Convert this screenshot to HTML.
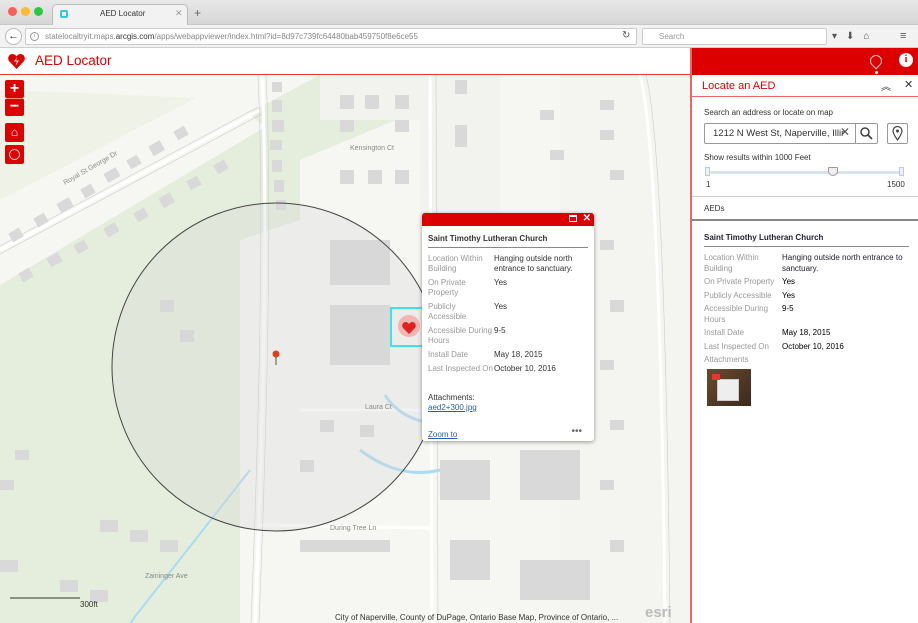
<!DOCTYPE html>
<html><head><meta charset="utf-8"><style>
*{box-sizing:border-box;margin:0;padding:0}
body{width:918px;height:623px;overflow:hidden;font-family:"Liberation Sans",sans-serif;position:relative;background:#fff}
.abs{position:absolute}
.tabbar{left:0;top:0;width:918px;height:25px;background:linear-gradient(#e8e8e8,#d6d6d6);border-bottom:1px solid #c8c8c8}
.addr{left:0;top:25px;width:918px;height:23px;background:#f2f2f2;border-bottom:1px solid #cfcfcf}
.hdr{left:0;top:48px;width:690px;height:27px;background:#fff;border-bottom:1px solid #e33}
.map{left:0;top:75px;width:690px;height:548px;overflow:hidden;background:#f6f6f3}
.btn{position:absolute;left:5px;width:19px;height:19px;background:#d00;border-radius:2px;color:#fff;text-align:center;font-weight:bold}
.panel{left:690px;top:48px;width:228px;height:575px;background:#fff;border-left:2px solid #e66}
.pop{left:422px;top:213px;width:172px;height:228px;background:#fff;box-shadow:0 1px 4px rgba(0,0,0,.4);border-radius:3px;overflow:hidden;font-size:8px;color:#333}
.row{display:flex;margin-bottom:4px;line-height:10px}
.row .k{color:#999;width:66px}
.prow{display:flex;line-height:10.5px;margin-bottom:3px;font-size:8px}
.prow .k{color:#999;width:78px}
</style></head><body>
<div class="abs tabbar">
 <div class="abs" style="left:8px;top:7px;width:9px;height:9px;border-radius:50%;background:#fc5f57"></div>
 <div class="abs" style="left:21px;top:7px;width:9px;height:9px;border-radius:50%;background:#fdbb2e"></div>
 <div class="abs" style="left:34px;top:7px;width:9px;height:9px;border-radius:50%;background:#29c840"></div>
 <div class="abs" style="left:52px;top:4px;width:136px;height:22px;background:#f2f2f2;border:1px solid #bbb;border-bottom:none;border-radius:5px 5px 0 0"></div>
 <div class="abs" style="left:60px;top:10px;width:8px;height:8px;border:2px solid #3bc4e0;border-radius:2px"></div>
 <div class="abs" style="left:100px;top:9px;font-size:8px;color:#333">AED Locator</div>
 <div class="abs" style="left:175px;top:8px;font-size:9px;color:#999">✕</div>
 <div class="abs" style="left:194px;top:6px;font-size:12px;color:#666">+</div>
</div>
<div class="abs addr">
 <div class="abs" style="left:5px;top:3px;width:17px;height:17px;border-radius:50%;background:#fff;border:1px solid #bbb;font-size:11px;line-height:15px;text-align:center;color:#333">←</div>
 <div class="abs" style="left:25px;top:3px;width:612px;height:17px;background:#fff;border:1px solid #ccc;border-radius:2px"></div>
 <div class="abs" style="left:30px;top:7px;width:9px;height:9px;border:1px solid #999;border-radius:50%;font-size:6px;text-align:center;line-height:7px;color:#999">i</div>
 <div class="abs" style="left:45px;top:7px;font-size:8px;color:#888">statelocaltryit.maps.<span style="color:#333">arcgis.com</span>/apps/webappviewer/index.html?id=8d97c739fc64480bab459750f8e6ce55</div>
 <div class="abs" style="left:622px;top:5px;font-size:10px;color:#555">↻</div>
 <div class="abs" style="left:642px;top:3px;width:185px;height:17px;background:#fff;border:1px solid #ccc;border-radius:2px;font-size:8px;color:#999;padding:3px 0 0 16px">Search</div>
 <div class="abs" style="left:832px;top:6px;font-size:10px;color:#555;letter-spacing:9px">▾⬇⌂</div>
 <div class="abs" style="left:900px;top:5px;font-size:11px;color:#555">≡</div>
</div>
<div class="abs hdr">
 <svg class="abs" style="left:8px;top:6px" width="17" height="15" viewBox="0 0 17 15"><path d="M8.5 15L1 7C-1 4 1 0 4.5 0 6.5 0 8 1.5 8.5 2.5 9 1.5 10.5 0 12.5 0 16 0 18 4 16 7Z" fill="#d00"/><path d="M9 3L6 7.5h3L7.5 12 11 6.5H8z" fill="#fff"/></svg>
 <div class="abs" style="left:35px;top:5px;font-size:13.5px;color:#d00">AED Locator</div>
</div>
<div class="abs map">
<svg width="690" height="548" viewBox="0 75 690 548">
 <path d="M0 240 L250 100 L0 90Z" fill="#e6eedb" opacity=".5"/>
 <path d="M0 275 L250 117 L270 75 L420 75 L420 110 L300 160 L300 220 L240 240 L240 623 L0 623Z" fill="#e5eedc"/>
 <path d="M0 240 L250 115 L265 127 L0 285Z" fill="#f6f6f3"/>
 <path d="M0 200 L240 75 L320 75 L0 245Z" fill="#f6f6f3"/>
 <path d="M320 75 L500 75 L500 230 L420 230 L420 120 L320 120Z" fill="#f2f2ef"/>
 <path d="M560 75 L690 75 L690 623 L560 623Z" fill="#f4f4f1"/>
 <g stroke="#fff" stroke-width="3" fill="none"><path d="M0 250 L260 110"/><path d="M262 75 Q270 250 255 623"/><path d="M430 75 L432 623"/><path d="M640 75 Q660 150 665 623"/><path d="M300 410 L420 410"/><path d="M260 525 L430 528"/></g>
 <g stroke="#ccc" stroke-width=".6" fill="none"><path d="M0 246 L258 107"/><path d="M0 254 L262 114"/><path d="M258 75 Q266 250 251 623"/><path d="M266 75 Q274 250 259 623"/><path d="M436 75 L438 623"/><path d="M646 75 Q665 150 670 623"/></g>
 <g fill="#d9d9d9">
  <rect x="10" y="230" width="12" height="10" transform="rotate(-30 16 235)"/><rect x="35" y="215" width="12" height="10" transform="rotate(-30 41 220)"/><rect x="58" y="200" width="14" height="10" transform="rotate(-30 65 205)"/><rect x="82" y="186" width="12" height="10" transform="rotate(-30 88 191)"/><rect x="105" y="170" width="14" height="10" transform="rotate(-30 112 175)"/><rect x="128" y="157" width="12" height="10" transform="rotate(-30 134 162)"/><rect x="150" y="143" width="13" height="11" transform="rotate(-30 156 148)"/><rect x="175" y="128" width="12" height="10" transform="rotate(-30 181 133)"/>
  <rect x="20" y="270" width="12" height="10" transform="rotate(-30 26 275)"/><rect x="48" y="255" width="13" height="10" transform="rotate(-30 54 260)"/><rect x="75" y="242" width="12" height="10" transform="rotate(-30 81 247)"/><rect x="105" y="225" width="13" height="10" transform="rotate(-30 111 230)"/><rect x="135" y="210" width="12" height="10" transform="rotate(-30 141 215)"/><rect x="160" y="195" width="13" height="11" transform="rotate(-30 166 200)"/><rect x="188" y="178" width="12" height="10" transform="rotate(-30 194 183)"/><rect x="215" y="162" width="12" height="10" transform="rotate(-30 221 167)"/>
  <rect x="272" y="82" width="10" height="10"/><rect x="272" y="100" width="10" height="12"/><rect x="272" y="120" width="12" height="12"/><rect x="270" y="140" width="12" height="10"/><rect x="272" y="160" width="10" height="12"/><rect x="274" y="180" width="10" height="12"/><rect x="276" y="200" width="10" height="10"/>
  <rect x="340" y="95" width="14" height="14"/><rect x="365" y="95" width="14" height="14"/><rect x="395" y="95" width="14" height="14"/><rect x="340" y="120" width="14" height="12"/><rect x="395" y="120" width="14" height="12"/><rect x="340" y="170" width="14" height="14"/><rect x="368" y="170" width="14" height="14"/><rect x="395" y="170" width="14" height="14"/><rect x="455" y="125" width="12" height="22"/><rect x="455" y="80" width="12" height="14"/>
  <rect x="330" y="240" width="60" height="45"/><rect x="330" y="305" width="60" height="60"/><rect x="440" y="460" width="50" height="40"/><rect x="520" y="450" width="60" height="50"/><rect x="300" y="540" width="90" height="12"/><rect x="450" y="540" width="40" height="40"/><rect x="520" y="560" width="70" height="40"/><rect x="100" y="520" width="18" height="12"/><rect x="130" y="530" width="18" height="12"/><rect x="160" y="540" width="18" height="12"/><rect x="60" y="580" width="18" height="12"/><rect x="90" y="590" width="18" height="12"/><rect x="0" y="560" width="18" height="12"/><rect x="15" y="450" width="14" height="10"/><rect x="0" y="480" width="14" height="10"/><rect x="600" y="100" width="14" height="10"/><rect x="600" y="130" width="14" height="10"/><rect x="610" y="170" width="14" height="10"/><rect x="600" y="240" width="14" height="10"/><rect x="610" y="300" width="14" height="12"/><rect x="600" y="360" width="14" height="10"/><rect x="610" y="420" width="14" height="10"/><rect x="600" y="480" width="14" height="10"/><rect x="610" y="540" width="14" height="12"/><rect x="540" y="110" width="14" height="10"/><rect x="550" y="150" width="14" height="10"/><rect x="160" y="300" width="14" height="12"/><rect x="180" y="330" width="14" height="12"/><rect x="320" y="420" width="14" height="12"/><rect x="360" y="425" width="14" height="12"/><rect x="300" y="460" width="14" height="12"/>
 </g>
 <path d="M385 395 Q400 420 440 425 L470 440 M360 450 Q400 480 440 470" stroke="#aadcf0" stroke-width="3" fill="none"/>
 <path d="M130 623 L250 470" stroke="#aadcf0" stroke-width="2"/>
 <circle cx="276" cy="367" r="164" fill="rgba(215,215,215,.32)" stroke="#444" stroke-width="1"/>
 <rect x="391" y="308" width="33" height="38" fill="none" stroke="#3fe0f0" stroke-width="2"/>
 <circle cx="409" cy="326" r="11" fill="#f4b4b4"/><path d="M409 334l-6-6c-2-3 0-6 3-6 1 0 2 1 3 2 1-1 2-2 3-2 3 0 5 3 3 6z" fill="#d22"/>
 <circle cx="276" cy="354" r="3.5" fill="#e04020"/><path d="M276 357v8" stroke="#555"/>
 <path d="M10 598h70" stroke="#333"/><text x="80" y="607" font-size="8" fill="#333" font-family="Liberation Sans">300ft</text>
 <text x="335" y="620" font-size="8" fill="#333" font-family="Liberation Sans">City of Naperville, County of DuPage, Ontario Base Map, Province of Ontario, ...</text>
 <text x="645" y="617" font-size="15" fill="#bbb" font-family="Liberation Sans" font-weight="bold">esri</text>
 <text x="350" y="150" font-size="7" fill="#888" font-family="Liberation Sans">Kensington Ct</text>
 <text x="330" y="530" font-size="7" fill="#888" font-family="Liberation Sans">During Tree Ln</text>
 <text x="365" y="409" font-size="7" fill="#888" font-family="Liberation Sans">Laura Ct</text>
 <text x="145" y="578" font-size="7" fill="#888" font-family="Liberation Sans">Zaininger Ave</text>
 <text x="65" y="185" font-size="7" fill="#888" font-family="Liberation Sans" transform="rotate(-30 65 185)">Royal St George Dr</text>
</svg>
 <div class="btn" style="top:5px;height:18px;font-size:16px;line-height:17px">+</div>
 <div class="btn" style="top:23px;height:18px;font-size:16px;line-height:16px;border-top:1px solid #f88">−</div>
 <div class="btn" style="top:48px;font-size:12px;line-height:19px">⌂</div>
 <div class="btn" style="top:70px"><div style="margin:4px auto;width:11px;height:11px;border:1px solid #fcc;border-radius:50%"></div></div>
</div>
<div class="abs pop">
 <div style="height:13px;background:#d00;position:relative"><span style="position:absolute;right:17px;top:2px;width:8px;height:7px;border:1px solid #fff;border-top-width:2px"></span><span style="position:absolute;right:3px;top:0;color:#fff;font-size:10px;font-weight:bold">✕</span></div>
 <div style="padding:8px 6px 0 6px">
  <div style="font-weight:bold;font-size:8px;padding-bottom:4px;border-bottom:1px solid #888;margin-bottom:6px">Saint Timothy Lutheran Church</div>
  <div class="row"><div class="k">Location Within Building</div><div style="width:90px">Hanging outside north entrance to sanctuary.</div></div>
  <div class="row"><div class="k">On Private Property</div><div>Yes</div></div>
  <div class="row"><div class="k">Publicly Accessible</div><div>Yes</div></div>
  <div class="row"><div class="k">Accessible During Hours</div><div>9-5</div></div>
  <div class="row"><div class="k">Install Date</div><div>May 18, 2015</div></div>
  <div class="row"><div class="k">Last Inspected On</div><div>October 10, 2016</div></div>
  <div style="margin-top:19px;line-height:10px">Attachments:<br><span style="color:#2a5ea8;text-decoration:underline">aed2+300.jpg</span></div>
  <div style="position:absolute;left:6px;top:217px;color:#2a5ea8;text-decoration:underline">Zoom to</div>
  <div style="position:absolute;right:12px;top:213px;color:#666;font-size:10px">•••</div>
 </div>
</div>
<div class="abs panel">
 <div style="height:27px;background:#d00;position:relative">
  <div class="abs" style="left:178px;top:7px;width:12px;height:12px;border:1.5px solid #fcc;border-radius:50% 50% 50% 0;transform:rotate(-45deg)"></div>
  <div class="abs" style="left:183px;top:23px;width:3px;height:3px;background:#fff;border-radius:50%"></div>
  <div class="abs" style="left:207px;top:5px;width:14px;height:14px;background:#fff;border-radius:50%;color:#d00;font-size:10px;font-weight:bold;text-align:center;line-height:14px;font-family:'Liberation Serif',serif">i</div>
 </div>
 <div style="height:22px;border-bottom:1px solid #e66;position:relative">
  <div class="abs" style="left:10px;top:5px;font-size:11px;color:#d00">Locate an AED</div>
  <div class="abs" style="left:189px;top:3px;font-size:10px;color:#333">︽</div>
  <div class="abs" style="left:212px;top:3px;font-size:11px;color:#333">✕</div>
 </div>
 <div class="abs" style="left:12px;top:60px;font-size:8px;color:#333">Search an address or locate on map</div>
 <div class="abs" style="left:12px;top:75px;width:174px;height:21px;border:1px solid #999;border-radius:2px;font-size:9.5px;color:#333;padding:4px 0 0 8px;overflow:hidden;white-space:nowrap">1212 N West St, Naperville, Illir</div>
 <div class="abs" style="left:148px;top:77px;font-size:12px;color:#555">✕</div>
 <div class="abs" style="left:163px;top:75px;width:1px;height:21px;background:#999"></div>
 <svg class="abs" style="left:168px;top:79px" width="13" height="13"><circle cx="5" cy="5" r="4" fill="none" stroke="#444" stroke-width="1.5"/><path d="M8 8l4 4" stroke="#444" stroke-width="1.8"/></svg>
 <div class="abs" style="left:195px;top:75px;width:21px;height:21px;border:1px solid #999;border-radius:2px"></div>
 <svg class="abs" style="left:200px;top:78px" width="11" height="15"><path d="M5.5 14C2 9 1 7 1 5a4.5 4.5 0 019 0c0 2-1 4-4.5 9z" fill="none" stroke="#444" stroke-width="1.2"/><circle cx="5.5" cy="5" r="1.5" fill="#444"/></svg>
 <div class="abs" style="left:12px;top:105px;font-size:8px;color:#333">Show results within 1000 Feet</div>
 <div class="abs" style="left:18px;top:123px;width:190px;height:3px;background:#d6e2ee;border-radius:2px"></div>
 <div class="abs" style="left:13px;top:119px;width:5px;height:9px;border:1px solid #bcd;background:#eef"></div>
 <div class="abs" style="left:207px;top:119px;width:5px;height:9px;border:1px solid #bcd;background:#eef"></div>
 <div class="abs" style="left:136px;top:119px;width:10px;height:9px;background:#eee;border:1px solid #999;border-radius:1px 1px 5px 5px"></div>
 <div class="abs" style="left:14px;top:132px;font-size:8px;color:#333">1</div>
 <div class="abs" style="left:195px;top:132px;font-size:8px;color:#333">1500</div>
 <div class="abs" style="left:0;top:148px;width:226px;height:1px;background:#ccc"></div>
 <div class="abs" style="left:12px;top:156px;font-size:8px;color:#333">AEDs</div>
 <div class="abs" style="left:0;top:171px;width:226px;height:1.5px;background:#888"></div>
 <div class="abs" style="left:12px;top:185px;width:205px">
  <div style="font-weight:bold;font-size:8px;color:#223;padding-bottom:4px;border-bottom:1px solid #888;margin-bottom:6px">Saint Timothy Lutheran Church</div>
  <div class="prow"><div class="k">Location Within Building</div><div style="width:125px;color:#223">Hanging outside north entrance to sanctuary.</div></div>
  <div class="prow"><div class="k">On Private Property</div><div>Yes</div></div>
  <div class="prow"><div class="k">Publicly Accessible</div><div>Yes</div></div>
  <div class="prow"><div class="k">Accessible During Hours</div><div>9-5</div></div>
  <div class="prow"><div class="k">Install Date</div><div>May 18, 2015</div></div>
  <div class="prow"><div class="k">Last Inspected On</div><div>October 10, 2016</div></div>
  <div class="prow"><div class="k">Attachments</div></div>
  <div style="width:44px;height:37px;background:linear-gradient(135deg,#6b4a2e,#3a2a1c);position:relative;margin-left:3px"><div style="position:absolute;left:10px;top:10px;width:22px;height:22px;background:#eee;border:1px solid #ccc"></div><div style="position:absolute;left:5px;top:5px;width:8px;height:6px;background:#e33"></div></div>
 </div>
</div>
</body></html>
